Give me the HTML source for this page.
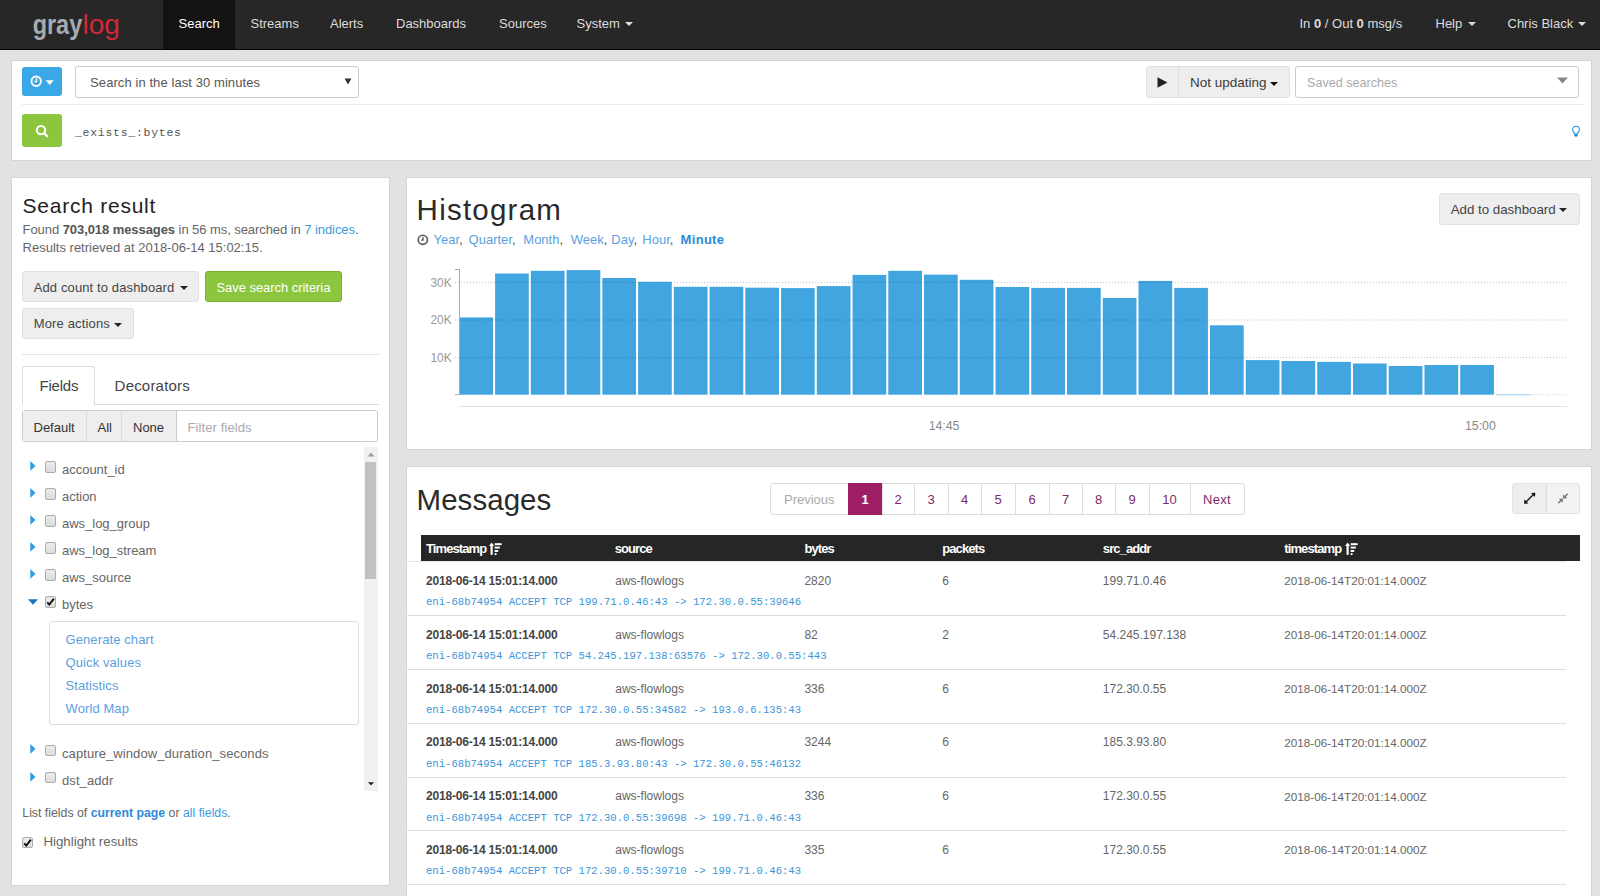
<!DOCTYPE html>
<html><head><meta charset="utf-8">
<style>
*{box-sizing:border-box}
html,body{margin:0;padding:0}
body{width:1600px;height:896px;overflow:hidden;background:#e2e2e2;font-family:"Liberation Sans",sans-serif;color:#666;position:relative}
.a{position:absolute}
.t{position:absolute;white-space:nowrap}
b{font-weight:bold}
</style></head>
<body>

<div class="a" style="left:0px;top:0px;width:1600px;height:49px;background:#272727"></div>
<div class="a" style="left:0px;top:49px;width:1600px;height:1px;background:#050505"></div>
<div class="a" style="left:163px;top:0px;width:72px;height:49px;background:#131313"></div>
<svg class="a" style="left:0;top:0" width="160" height="49" viewBox="0 0 160 49"><text x="32.7" y="33.5" font-family="Liberation Sans" font-weight="bold" font-size="27" fill="#a7aaaf" textLength="49.5" lengthAdjust="spacingAndGlyphs">gray</text><text x="82.5" y="33.5" font-family="Liberation Sans" font-size="27" fill="#d3283a" textLength="37.5" lengthAdjust="spacingAndGlyphs">log</text></svg>
<div class="t" style="left:178.5px;top:17.30px;font-size:13px;line-height:13px;color:#fff;">Search</div>
<div class="t" style="left:250.5px;top:17.30px;font-size:13px;line-height:13px;color:#ddd;">Streams</div>
<div class="t" style="left:330px;top:17.30px;font-size:13px;line-height:13px;color:#ddd;">Alerts</div>
<div class="t" style="left:396px;top:17.30px;font-size:13px;line-height:13px;color:#ddd;">Dashboards</div>
<div class="t" style="left:499px;top:17.30px;font-size:13px;line-height:13px;color:#ddd;">Sources</div>
<div class="t" style="left:576.5px;top:17.30px;font-size:13px;line-height:13px;color:#ddd;">System</div>
<svg class="a" style="left:625px;top:22px" width="8" height="4" viewBox="0 0 8 4"><path d="M0 0 H8 L4.0 4 Z" fill="#ddd"/></svg>
<div class="t" style="left:1299.5px;top:17.30px;font-size:13px;line-height:13px;color:#ddd;">In <b>0</b> / Out <b>0</b> msg/s</div>
<div class="t" style="left:1435.5px;top:17.30px;font-size:13px;line-height:13px;color:#ddd;">Help</div>
<svg class="a" style="left:1468px;top:22px" width="8" height="4" viewBox="0 0 8 4"><path d="M0 0 H8 L4.0 4 Z" fill="#ddd"/></svg>
<div class="t" style="left:1507.5px;top:17.30px;font-size:13px;line-height:13px;color:#ddd;">Chris Black</div>
<svg class="a" style="left:1578px;top:22px" width="8" height="4" viewBox="0 0 8 4"><path d="M0 0 H8 L4.0 4 Z" fill="#ddd"/></svg>
<div class="a" style="left:11px;top:60px;width:1581px;height:101px;background:#fff;border:1px solid #d4d4d4"></div>
<div class="a" style="left:22px;top:67px;width:40px;height:29px;background:#3aa8e7;border-radius:3px"></div>
<svg class="a" style="left:30px;top:74px" width="24" height="16" viewBox="0 0 24 16"><circle cx="6.2" cy="7.2" r="4.75" fill="none" stroke="#fff" stroke-width="1.9"/><path d="M6.5 4.3 V7.6 H4.4" fill="none" stroke="#fff" stroke-width="1.4"/><path d="M15.7 6.2 L23.8 6.2 L19.75 10.9 Z" fill="#fff"/></svg>
<div class="a" style="left:75px;top:66px;width:284px;height:32px;background:#fff;border:1px solid #ccc;border-radius:3px"></div>
<div class="t" style="left:90.1px;top:76.20px;font-size:13px;line-height:13px;color:#555;letter-spacing:0.08px;">Search in the last 30 minutes</div>
<svg class="a" style="left:344px;top:78px" width="8" height="7" viewBox="0 0 8 7"><path d="M0.6 0.6 H7.4 L4 6.4 Z" fill="#333"/></svg>
<div class="a" style="left:22px;top:104px;width:1563px;height:1px;background:#eaeaea"></div>
<div class="a" style="left:1146px;top:66px;width:144px;height:32px;background:#eee;border:1px solid #e2e2e2;border-radius:3px"></div>
<div class="a" style="left:1178px;top:67px;width:1px;height:30px;background:#dedede"></div>
<svg class="a" style="left:1157px;top:77px" width="11" height="11" viewBox="0 0 11 11"><path d="M0.5 0.3 L10.5 5.5 L0.5 10.7 Z" fill="#222"/></svg>
<div class="t" style="left:1190px;top:76.07px;font-size:13.5px;line-height:13.5px;color:#3a3a3a;">Not updating</div>
<svg class="a" style="left:1270px;top:82px" width="8" height="4" viewBox="0 0 8 4"><path d="M0 0 H8 L4.0 4 Z" fill="#111"/></svg>
<div class="a" style="left:1295px;top:66px;width:284px;height:32px;background:#fff;border:1px solid #ccc;border-radius:3px"></div>
<div class="t" style="left:1307px;top:76.83px;font-size:12.6px;line-height:12.6px;color:#aaa;">Saved searches</div>
<svg class="a" style="left:1557px;top:77px" width="12" height="7" viewBox="0 0 12 7"><path d="M0 0.5 H11 L5.5 6.5 Z" fill="#888"/></svg>
<div class="a" style="left:22px;top:114px;width:40px;height:33px;background:#8cc63e;border-radius:3px"></div>
<svg class="a" style="left:34px;top:122px" width="18" height="18" viewBox="0 0 18 18"><circle cx="7.0" cy="8.1" r="4.2" fill="none" stroke="#fff" stroke-width="2.0"/><path d="M10.3 11.4 L13.2 14.2" stroke="#fff" stroke-width="2.2" stroke-linecap="round"/></svg>
<div class="t" style="left:75px;top:127.39px;font-size:11.5px;line-height:11.5px;color:#555;font-family:'Liberation Mono',monospace;letter-spacing:0.72px;">_exists_:bytes</div>
<svg class="a" style="left:1570px;top:124px" width="12" height="14" viewBox="0 0 12 14"><path d="M6 2.3 C3.9 2.3 2.6 3.8 2.6 5.6 C2.6 7.2 3.9 8 5.1 10.6 H6.9 C8.1 8 9.4 7.2 9.4 5.6 C9.4 3.8 8.1 2.3 6 2.3 Z" fill="none" stroke="#1a8fdc" stroke-width="1.1"/><circle cx="6" cy="11.2" r="1.6" fill="#1a8fdc"/></svg>
<div class="a" style="left:11px;top:177px;width:379px;height:709px;background:#fff;border:1px solid #d4d4d4"></div>
<div class="t" style="left:22.6px;top:195.22px;font-size:21px;line-height:21px;color:#222;letter-spacing:0.75px;">Search result</div>
<div class="t" style="left:22.6px;top:222.70px;font-size:13px;line-height:13px;color:#666;letter-spacing:-0.07px;">Found <b style="color:#555">703,018 messages</b> in 56 ms, searched in <span style="color:#3d9ae0">7 indices</span>.</div>
<div class="t" style="left:22.6px;top:240.80px;font-size:13px;line-height:13px;color:#666;">Results retrieved at 2018-06-14 15:02:15.</div>
<div class="a" style="left:22px;top:271px;width:177px;height:31px;background:#eee;border:1px solid #e1e1e1;border-radius:3px"></div>
<div class="t" style="left:33.7px;top:280.50px;font-size:13px;line-height:13px;color:#444;letter-spacing:0.12px;">Add count to dashboard</div>
<svg class="a" style="left:180px;top:286px" width="8" height="4" viewBox="0 0 8 4"><path d="M0 0 H8 L4.0 4 Z" fill="#222"/></svg>
<div class="a" style="left:205px;top:271px;width:137px;height:31px;background:#8cc63e;border:1px solid #74b22e;border-radius:3px"></div>
<div class="t" style="left:216.5px;top:280.50px;font-size:13px;line-height:13px;color:#fff;letter-spacing:-0.05px;">Save search criteria</div>
<div class="a" style="left:22px;top:308px;width:112px;height:31px;background:#eee;border:1px solid #e1e1e1;border-radius:3px"></div>
<div class="t" style="left:33.7px;top:317.00px;font-size:13px;line-height:13px;color:#444;letter-spacing:0.15px;">More actions</div>
<svg class="a" style="left:114px;top:323px" width="8" height="4" viewBox="0 0 8 4"><path d="M0 0 H8 L4.0 4 Z" fill="#222"/></svg>
<div class="a" style="left:22px;top:354px;width:357px;height:1px;background:#e5e5e5"></div>
<div class="a" style="left:22px;top:366px;width:73px;height:39px;background:#fff;border:1px solid #ddd;border-bottom:none;border-radius:3px 3px 0 0"></div>
<div class="a" style="left:95px;top:404px;width:284px;height:1px;background:#ddd"></div>
<div class="t" style="left:39.5px;top:378.30px;font-size:15px;line-height:15px;color:#444;letter-spacing:-0.2px;">Fields</div>
<div class="t" style="left:114.6px;top:378.30px;font-size:15px;line-height:15px;color:#444;letter-spacing:0.2px;">Decorators</div>
<div class="a" style="left:22px;top:410px;width:356px;height:32px;background:#fff;border:1px solid #ccc;border-radius:3px"></div>
<div class="a" style="left:23px;top:411px;width:153px;height:30px;background:#eee"></div>
<div class="a" style="left:86px;top:411px;width:1px;height:30px;background:#ddd"></div>
<div class="a" style="left:121px;top:411px;width:1px;height:30px;background:#ddd"></div>
<div class="a" style="left:176px;top:410px;width:1px;height:32px;background:#ccc"></div>
<div class="t" style="left:33.5px;top:420.50px;font-size:13px;line-height:13px;color:#333;">Default</div>
<div class="t" style="left:97.5px;top:420.50px;font-size:13px;line-height:13px;color:#333;">All</div>
<div class="t" style="left:133px;top:420.50px;font-size:13px;line-height:13px;color:#333;">None</div>
<div class="t" style="left:187.5px;top:420.50px;font-size:13px;line-height:13px;color:#aaa;letter-spacing:0.1px;">Filter fields</div>
<div class="a" style="left:364px;top:447px;width:14px;height:344px;background:#f1f1f1"></div>
<div class="a" style="left:365px;top:462px;width:11px;height:117px;background:#c1c1c1"></div>
<svg class="a" style="left:367px;top:452px" width="8" height="5" viewBox="0 0 8 5"><path d="M0.5 4.5 L4 0.5 L7.5 4.5 Z" fill="#a3a3a3"/></svg>
<svg class="a" style="left:368px;top:782px" width="6" height="4" viewBox="0 0 6 4"><path d="M0 0.2 L6 0.2 L3 3.6 Z" fill="#222"/></svg>
<svg class="a" style="left:29.8px;top:461.15px" width="6" height="10" viewBox="0 0 6 10"><path d="M0.3 0 L5.5 4.9 L0.3 9.8 Z" fill="#2a9ee3"/></svg>
<div class="a" style="left:44.8px;top:461.25px;width:11px;height:11.5px;border:1px solid #ababab;border-radius:2px;background:linear-gradient(#ececec,#dcdcdc)"></div>
<div class="t" style="left:62px;top:463.45px;font-size:13px;line-height:13px;color:#666;letter-spacing:-0.02px;">account_id</div>
<svg class="a" style="left:29.8px;top:488.15px" width="6" height="10" viewBox="0 0 6 10"><path d="M0.3 0 L5.5 4.9 L0.3 9.8 Z" fill="#2a9ee3"/></svg>
<div class="a" style="left:44.8px;top:488.25px;width:11px;height:11.5px;border:1px solid #ababab;border-radius:2px;background:linear-gradient(#ececec,#dcdcdc)"></div>
<div class="t" style="left:62px;top:490.45px;font-size:13px;line-height:13px;color:#666;letter-spacing:-0.02px;">action</div>
<svg class="a" style="left:29.8px;top:515.1500000000001px" width="6" height="10" viewBox="0 0 6 10"><path d="M0.3 0 L5.5 4.9 L0.3 9.8 Z" fill="#2a9ee3"/></svg>
<div class="a" style="left:44.8px;top:515.25px;width:11px;height:11.5px;border:1px solid #ababab;border-radius:2px;background:linear-gradient(#ececec,#dcdcdc)"></div>
<div class="t" style="left:62px;top:517.45px;font-size:13px;line-height:13px;color:#666;letter-spacing:-0.02px;">aws_log_group</div>
<svg class="a" style="left:29.8px;top:542.1500000000001px" width="6" height="10" viewBox="0 0 6 10"><path d="M0.3 0 L5.5 4.9 L0.3 9.8 Z" fill="#2a9ee3"/></svg>
<div class="a" style="left:44.8px;top:542.25px;width:11px;height:11.5px;border:1px solid #ababab;border-radius:2px;background:linear-gradient(#ececec,#dcdcdc)"></div>
<div class="t" style="left:62px;top:544.45px;font-size:13px;line-height:13px;color:#666;letter-spacing:-0.02px;">aws_log_stream</div>
<svg class="a" style="left:29.8px;top:569.1500000000001px" width="6" height="10" viewBox="0 0 6 10"><path d="M0.3 0 L5.5 4.9 L0.3 9.8 Z" fill="#2a9ee3"/></svg>
<div class="a" style="left:44.8px;top:569.25px;width:11px;height:11.5px;border:1px solid #ababab;border-radius:2px;background:linear-gradient(#ececec,#dcdcdc)"></div>
<div class="t" style="left:62px;top:571.45px;font-size:13px;line-height:13px;color:#666;letter-spacing:-0.02px;">aws_source</div>
<svg class="a" style="left:28.3px;top:599.0500000000001px" width="10" height="7" viewBox="0 0 10 7"><path d="M0 0.3 H10 L5 5.8 Z" fill="#1f72b8"/></svg>
<div class="a" style="left:44.8px;top:596.25px;width:11px;height:11.5px;border:1px solid #ababab;border-radius:2px;background:linear-gradient(#ececec,#dcdcdc)"></div>
<svg class="a" style="left:44.8px;top:596.25px" width="11" height="12" viewBox="0 0 11 12"><path d="M2.2 6.4 L4.3 8.6 L8.9 2.6" fill="none" stroke="#111" stroke-width="1.9"/></svg>
<div class="t" style="left:62px;top:598.45px;font-size:13px;line-height:13px;color:#666;">bytes</div>
<div class="a" style="left:49px;top:621px;width:310px;height:104px;background:#fff;border:1px solid #ddd;border-radius:3px"></div>
<div class="t" style="left:65.5px;top:632.50px;font-size:13px;line-height:13px;color:#5b9fe0;letter-spacing:0.1px;">Generate chart</div>
<div class="t" style="left:65.5px;top:655.60px;font-size:13px;line-height:13px;color:#5b9fe0;letter-spacing:0.1px;">Quick values</div>
<div class="t" style="left:65.5px;top:678.70px;font-size:13px;line-height:13px;color:#5b9fe0;letter-spacing:0.1px;">Statistics</div>
<div class="t" style="left:65.5px;top:701.80px;font-size:13px;line-height:13px;color:#5b9fe0;letter-spacing:0.1px;">World Map</div>
<svg class="a" style="left:29.8px;top:744.4000000000001px" width="6" height="10" viewBox="0 0 6 10"><path d="M0.3 0 L5.5 4.9 L0.3 9.8 Z" fill="#2a9ee3"/></svg>
<div class="a" style="left:44.8px;top:744.5px;width:11px;height:11.5px;border:1px solid #ababab;border-radius:2px;background:linear-gradient(#ececec,#dcdcdc)"></div>
<div class="t" style="left:62px;top:746.70px;font-size:13px;line-height:13px;color:#666;letter-spacing:0.09px;">capture_window_duration_seconds</div>
<svg class="a" style="left:29.8px;top:771.6px" width="6" height="10" viewBox="0 0 6 10"><path d="M0.3 0 L5.5 4.9 L0.3 9.8 Z" fill="#2a9ee3"/></svg>
<div class="a" style="left:44.8px;top:771.6999999999999px;width:11px;height:11.5px;border:1px solid #ababab;border-radius:2px;background:linear-gradient(#ececec,#dcdcdc)"></div>
<div class="t" style="left:62px;top:773.90px;font-size:13px;line-height:13px;color:#666;letter-spacing:0.09px;">dst_addr</div>
<div class="t" style="left:22.3px;top:806.59px;font-size:12.3px;line-height:12.3px;color:#666;">List fields of <b style="color:#2d8bd6">current page</b> or <span style="color:#3d9ae0">all fields</span>.</div>
<div class="a" style="left:22.3px;top:836.5px;width:11px;height:11.5px;border:1px solid #ababab;border-radius:2px;background:linear-gradient(#ececec,#dcdcdc)"></div>
<svg class="a" style="left:22.3px;top:836.5px" width="11" height="12" viewBox="0 0 11 12"><path d="M2.2 6.4 L4.3 8.6 L8.9 2.6" fill="none" stroke="#111" stroke-width="1.9"/></svg>
<div class="t" style="left:43.4px;top:835.04px;font-size:13.3px;line-height:13.3px;color:#666;">Highlight results</div>
<div class="a" style="left:406px;top:177px;width:1186px;height:273px;background:#fff;border:1px solid #d4d4d4"></div>
<div class="t" style="left:416.6px;top:195.33px;font-size:29.5px;line-height:29.5px;color:#2a2a2a;letter-spacing:1.23px;">Histogram</div>
<svg class="a" style="left:417px;top:234px" width="12" height="12" viewBox="0 0 12 12"><circle cx="5.8" cy="5.8" r="4.6" fill="none" stroke="#555" stroke-width="1.6"/><path d="M6 3 V6.2 H4" fill="none" stroke="#555" stroke-width="1.3"/></svg>
<div class="t" style="left:433.6px;top:233.10px;font-size:13px;line-height:13px;color:#555;"><span style="color:#5b9fe0">Year</span>,</div>
<div class="t" style="left:468.6px;top:233.10px;font-size:13px;line-height:13px;color:#555;"><span style="color:#5b9fe0">Quarter</span>,</div>
<div class="t" style="left:523.3px;top:233.10px;font-size:13px;line-height:13px;color:#555;"><span style="color:#5b9fe0">Month</span>,</div>
<div class="t" style="left:570.8px;top:233.10px;font-size:13px;line-height:13px;color:#555;"><span style="color:#5b9fe0">Week</span>,</div>
<div class="t" style="left:611.3px;top:233.10px;font-size:13px;line-height:13px;color:#555;"><span style="color:#5b9fe0">Day</span>,</div>
<div class="t" style="left:642.3px;top:233.10px;font-size:13px;line-height:13px;color:#555;"><span style="color:#5b9fe0">Hour</span>,</div>
<div class="t" style="left:680.6px;top:233.10px;font-size:13px;line-height:13px;color:#2d8bd6;font-weight:bold;letter-spacing:0.3px;">Minute</div>
<div class="a" style="left:1439px;top:193px;width:141px;height:32px;background:#eee;border:1px solid #e1e1e1;border-radius:3px"></div>
<div class="t" style="left:1450.7px;top:203.04px;font-size:13.3px;line-height:13.3px;color:#444;">Add to dashboard</div>
<svg class="a" style="left:1559px;top:208px" width="8" height="4" viewBox="0 0 8 4"><path d="M0 0 H8 L4.0 4 Z" fill="#222"/></svg>
<svg class="a" style="left:0;top:0" width="1600" height="896" viewBox="0 0 1600 896">
<rect x="459.35" y="317.4" width="33.7" height="77.30" fill="#41a6df"/>
<rect x="495.10" y="273.5" width="33.7" height="121.20" fill="#41a6df"/>
<rect x="530.84" y="270.8" width="33.7" height="123.90" fill="#41a6df"/>
<rect x="566.59" y="270.1" width="33.7" height="124.60" fill="#41a6df"/>
<rect x="602.33" y="278.0" width="33.7" height="116.70" fill="#41a6df"/>
<rect x="638.08" y="281.8" width="33.7" height="112.90" fill="#41a6df"/>
<rect x="673.82" y="286.8" width="33.7" height="107.90" fill="#41a6df"/>
<rect x="709.57" y="286.8" width="33.7" height="107.90" fill="#41a6df"/>
<rect x="745.31" y="287.7" width="33.7" height="107.00" fill="#41a6df"/>
<rect x="781.06" y="288.1" width="33.7" height="106.60" fill="#41a6df"/>
<rect x="816.80" y="286.1" width="33.7" height="108.60" fill="#41a6df"/>
<rect x="852.55" y="274.9" width="33.7" height="119.80" fill="#41a6df"/>
<rect x="888.29" y="270.8" width="33.7" height="123.90" fill="#41a6df"/>
<rect x="924.03" y="274.6" width="33.7" height="120.10" fill="#41a6df"/>
<rect x="959.78" y="279.8" width="33.7" height="114.90" fill="#41a6df"/>
<rect x="995.52" y="287.0" width="33.7" height="107.70" fill="#41a6df"/>
<rect x="1031.27" y="287.9" width="33.7" height="106.80" fill="#41a6df"/>
<rect x="1067.01" y="287.9" width="33.7" height="106.80" fill="#41a6df"/>
<rect x="1102.76" y="298.0" width="33.7" height="96.70" fill="#41a6df"/>
<rect x="1138.51" y="280.9" width="33.7" height="113.80" fill="#41a6df"/>
<rect x="1174.25" y="287.9" width="33.7" height="106.80" fill="#41a6df"/>
<rect x="1209.99" y="325.3" width="33.7" height="69.40" fill="#41a6df"/>
<rect x="1245.74" y="360.1" width="33.7" height="34.60" fill="#41a6df"/>
<rect x="1281.49" y="361.0" width="33.7" height="33.70" fill="#41a6df"/>
<rect x="1317.23" y="361.9" width="33.7" height="32.80" fill="#41a6df"/>
<rect x="1352.97" y="363.5" width="33.7" height="31.20" fill="#41a6df"/>
<rect x="1388.72" y="366.0" width="33.7" height="28.70" fill="#41a6df"/>
<rect x="1424.46" y="365.0" width="33.7" height="29.70" fill="#41a6df"/>
<rect x="1460.21" y="365.0" width="33.7" height="29.70" fill="#41a6df"/>
<rect x="1495.95" y="394.09999999999997" width="34.5" height="1.2" fill="#a9d3f0"/>
<line x1="455" y1="282.4" x2="1567" y2="282.4" stroke="rgba(0,0,0,0.24)" stroke-width="1" stroke-dasharray="1.1,1.9"/>
<line x1="455" y1="320.0" x2="1567" y2="320.0" stroke="rgba(0,0,0,0.24)" stroke-width="1" stroke-dasharray="1.1,1.9"/>
<line x1="455" y1="357.6" x2="1567" y2="357.6" stroke="rgba(0,0,0,0.24)" stroke-width="1" stroke-dasharray="1.1,1.9"/>
<line x1="1531" y1="394.7" x2="1567" y2="394.7" stroke="rgba(0,0,0,0.18)" stroke-width="1" stroke-dasharray="1.1,1.9"/>
<path d="M455 269.5 H459.5 V394.7 H455" fill="none" stroke="#aaa" stroke-width="1"/>
<line x1="459" y1="406.5" x2="1567" y2="406.5" stroke="#e2e2e2" stroke-width="1"/>
</svg>
<div class="t" style="left:430.4px;top:276.54px;font-size:12px;line-height:12px;color:#999;">30K</div>
<div class="t" style="left:430.4px;top:314.14px;font-size:12px;line-height:12px;color:#999;">20K</div>
<div class="t" style="left:430.4px;top:351.74px;font-size:12px;line-height:12px;color:#999;">10K</div>
<div class="t" style="left:928.7px;top:419.99px;font-size:12.3px;line-height:12.3px;color:#888;">14:45</div>
<div class="t" style="left:1465px;top:419.79px;font-size:12.3px;line-height:12.3px;color:#888;">15:00</div>
<div class="a" style="left:406px;top:466px;width:1186px;height:440px;background:#fff;border:1px solid #d4d4d4"></div>
<div class="t" style="left:416.55px;top:484.83px;font-size:29.5px;line-height:29.5px;color:#2a2a2a;letter-spacing:0.04px;">Messages</div>
<div class="a" style="left:770px;top:483px;width:475px;height:32px;background:#fff;border:1px solid #ddd;border-radius:3px"></div>
<div class="a" style="left:848px;top:484px;width:1px;height:30px;background:#ddd"></div>
<div class="a" style="left:882px;top:484px;width:1px;height:30px;background:#ddd"></div>
<div class="a" style="left:914px;top:484px;width:1px;height:30px;background:#ddd"></div>
<div class="a" style="left:948px;top:484px;width:1px;height:30px;background:#ddd"></div>
<div class="a" style="left:981px;top:484px;width:1px;height:30px;background:#ddd"></div>
<div class="a" style="left:1015px;top:484px;width:1px;height:30px;background:#ddd"></div>
<div class="a" style="left:1049px;top:484px;width:1px;height:30px;background:#ddd"></div>
<div class="a" style="left:1082px;top:484px;width:1px;height:30px;background:#ddd"></div>
<div class="a" style="left:1115px;top:484px;width:1px;height:30px;background:#ddd"></div>
<div class="a" style="left:1149px;top:484px;width:1px;height:30px;background:#ddd"></div>
<div class="a" style="left:1190px;top:484px;width:1px;height:30px;background:#ddd"></div>
<div class="a" style="left:848px;top:483px;width:34px;height:32px;background:#9e1f63"></div>
<div class="t" style="left:784px;top:492.70px;font-size:13px;line-height:13px;color:#aaa;">Previous</div>
<div class="t" style="left:848px;top:492.70px;font-weight:bold;;width:34px;text-align:center;font-size:13px;line-height:13px;color:#fff">1</div>
<div class="t" style="left:882px;top:492.70px;;width:32px;text-align:center;font-size:13px;line-height:13px;color:#7f2868">2</div>
<div class="t" style="left:914px;top:492.70px;;width:34px;text-align:center;font-size:13px;line-height:13px;color:#7f2868">3</div>
<div class="t" style="left:948px;top:492.70px;;width:33px;text-align:center;font-size:13px;line-height:13px;color:#7f2868">4</div>
<div class="t" style="left:981px;top:492.70px;;width:34px;text-align:center;font-size:13px;line-height:13px;color:#7f2868">5</div>
<div class="t" style="left:1015px;top:492.70px;;width:34px;text-align:center;font-size:13px;line-height:13px;color:#7f2868">6</div>
<div class="t" style="left:1049px;top:492.70px;;width:33px;text-align:center;font-size:13px;line-height:13px;color:#7f2868">7</div>
<div class="t" style="left:1082px;top:492.70px;;width:33px;text-align:center;font-size:13px;line-height:13px;color:#7f2868">8</div>
<div class="t" style="left:1115px;top:492.70px;;width:34px;text-align:center;font-size:13px;line-height:13px;color:#7f2868">9</div>
<div class="t" style="left:1149px;top:492.70px;;width:41px;text-align:center;font-size:13px;line-height:13px;color:#7f2868">10</div>
<div class="t" style="left:1203px;top:492.70px;font-size:13px;line-height:13px;color:#7f2868;letter-spacing:0.3px;">Next</div>
<div class="a" style="left:1512px;top:483px;width:68px;height:31px;background:#f3f3f3;border:1px solid #e3e3e3;border-radius:3px"></div>
<div class="a" style="left:1513px;top:484px;width:34px;height:29px;background:#eeeeee;border-radius:3px 0 0 3px"></div>
<div class="a" style="left:1546px;top:484px;width:1px;height:29px;background:#dcdcdc"></div>
<svg class="a" style="left:1512px;top:483px" width="68" height="31" viewBox="0 0 68 31"><path d="M14.2 18.7 L21.2 11.8" stroke="#111" stroke-width="1.3"/><path d="M23.3 9.7 L23.0 14.0 L19.0 10.0 Z M12.1 20.8 L12.4 16.5 L16.4 20.5 Z" fill="#111"/><path d="M46.2 20.3 L49.6 16.9 M55.8 10.8 L52.4 14.2" stroke="#777" stroke-width="1.4"/><path d="M51.0 15.5 L46.8 15.8 L50.7 19.7 Z M51.0 15.5 L55.2 15.2 L51.3 11.3 Z" fill="#777"/></svg>
<div class="a" style="left:421px;top:535px;width:1159px;height:26px;background:#262626"></div>
<div class="a" style="left:406px;top:561px;width:1160px;height:1px;background:#e6e6e6"></div>
<div class="t" style="left:426px;top:542.40px;font-size:13px;line-height:13px;color:#fff;font-weight:bold;letter-spacing:-0.9px;">Timestamp</div>
<svg class="a" style="left:489px;top:542px" width="13" height="13" viewBox="0 0 13 13"><path d="M2.6 0.6 L0.1 4.1 H1.5 V12.8 H3.7 V4.1 H5.1 Z" fill="#fff"/><rect x="5.6" y="1.2" width="7" height="2" fill="#fff"/><rect x="5.6" y="4.6" width="5.2" height="2" fill="#fff"/><rect x="5.6" y="8" width="3.6" height="2" fill="#fff"/><rect x="5.6" y="11.2" width="2" height="1.8" fill="#fff"/></svg>
<div class="t" style="left:614.7px;top:542.40px;font-size:13px;line-height:13px;color:#fff;font-weight:bold;letter-spacing:-0.9px;">source</div>
<div class="t" style="left:804.4px;top:542.40px;font-size:13px;line-height:13px;color:#fff;font-weight:bold;letter-spacing:-0.9px;">bytes</div>
<div class="t" style="left:942.2px;top:542.40px;font-size:13px;line-height:13px;color:#fff;font-weight:bold;letter-spacing:-0.9px;">packets</div>
<div class="t" style="left:1102.8px;top:542.40px;font-size:13px;line-height:13px;color:#fff;font-weight:bold;letter-spacing:-0.9px;">src_addr</div>
<div class="t" style="left:1284.25px;top:542.40px;font-size:13px;line-height:13px;color:#fff;font-weight:bold;letter-spacing:-0.9px;">timestamp</div>
<svg class="a" style="left:1345px;top:542px" width="13" height="13" viewBox="0 0 13 13"><path d="M2.6 0.6 L0.1 4.1 H1.5 V12.8 H3.7 V4.1 H5.1 Z" fill="#fff"/><rect x="5.6" y="1.2" width="7" height="2" fill="#fff"/><rect x="5.6" y="4.6" width="5.2" height="2" fill="#fff"/><rect x="5.6" y="8" width="3.6" height="2" fill="#fff"/><rect x="5.6" y="11.2" width="2" height="1.8" fill="#fff"/></svg>
<div class="t" style="left:426px;top:574.84px;font-size:12px;line-height:12px;color:#444;font-weight:bold;letter-spacing:-0.2px;">2018-06-14 15:01:14.000</div>
<div class="t" style="left:615.25px;top:574.84px;font-size:12px;line-height:12px;color:#666;">aws-flowlogs</div>
<div class="t" style="left:804.4px;top:574.84px;font-size:12px;line-height:12px;color:#666;">2820</div>
<div class="t" style="left:942.2px;top:574.84px;font-size:12px;line-height:12px;color:#666;">6</div>
<div class="t" style="left:1102.8px;top:574.84px;font-size:12px;line-height:12px;color:#666;">199.71.0.46</div>
<div class="t" style="left:1284.25px;top:575.10px;font-size:11.7px;line-height:11.7px;color:#666;">2018-06-14T20:01:14.000Z</div>
<div class="t" style="left:426px;top:597.18px;font-size:10.6px;line-height:10.6px;color:#3b96d9;font-family:'Liberation Mono',monospace;">eni-68b74954 ACCEPT TCP 199.71.0.46:43 -&gt; 172.30.0.55:39646</div>
<div class="a" style="left:406px;top:615px;width:1160px;height:1px;background:#dedede"></div>
<div class="t" style="left:426px;top:628.69px;font-size:12px;line-height:12px;color:#444;font-weight:bold;letter-spacing:-0.2px;">2018-06-14 15:01:14.000</div>
<div class="t" style="left:615.25px;top:628.69px;font-size:12px;line-height:12px;color:#666;">aws-flowlogs</div>
<div class="t" style="left:804.4px;top:628.69px;font-size:12px;line-height:12px;color:#666;">82</div>
<div class="t" style="left:942.2px;top:628.69px;font-size:12px;line-height:12px;color:#666;">2</div>
<div class="t" style="left:1102.8px;top:628.69px;font-size:12px;line-height:12px;color:#666;">54.245.197.138</div>
<div class="t" style="left:1284.25px;top:628.95px;font-size:11.7px;line-height:11.7px;color:#666;">2018-06-14T20:01:14.000Z</div>
<div class="t" style="left:426px;top:651.03px;font-size:10.6px;line-height:10.6px;color:#3b96d9;font-family:'Liberation Mono',monospace;">eni-68b74954 ACCEPT TCP 54.245.197.138:63576 -&gt; 172.30.0.55:443</div>
<div class="a" style="left:406px;top:669px;width:1160px;height:1px;background:#dedede"></div>
<div class="t" style="left:426px;top:682.54px;font-size:12px;line-height:12px;color:#444;font-weight:bold;letter-spacing:-0.2px;">2018-06-14 15:01:14.000</div>
<div class="t" style="left:615.25px;top:682.54px;font-size:12px;line-height:12px;color:#666;">aws-flowlogs</div>
<div class="t" style="left:804.4px;top:682.54px;font-size:12px;line-height:12px;color:#666;">336</div>
<div class="t" style="left:942.2px;top:682.54px;font-size:12px;line-height:12px;color:#666;">6</div>
<div class="t" style="left:1102.8px;top:682.54px;font-size:12px;line-height:12px;color:#666;">172.30.0.55</div>
<div class="t" style="left:1284.25px;top:682.80px;font-size:11.7px;line-height:11.7px;color:#666;">2018-06-14T20:01:14.000Z</div>
<div class="t" style="left:426px;top:704.88px;font-size:10.6px;line-height:10.6px;color:#3b96d9;font-family:'Liberation Mono',monospace;">eni-68b74954 ACCEPT TCP 172.30.0.55:34582 -&gt; 193.0.6.135:43</div>
<div class="a" style="left:406px;top:723px;width:1160px;height:1px;background:#dedede"></div>
<div class="t" style="left:426px;top:736.39px;font-size:12px;line-height:12px;color:#444;font-weight:bold;letter-spacing:-0.2px;">2018-06-14 15:01:14.000</div>
<div class="t" style="left:615.25px;top:736.39px;font-size:12px;line-height:12px;color:#666;">aws-flowlogs</div>
<div class="t" style="left:804.4px;top:736.39px;font-size:12px;line-height:12px;color:#666;">3244</div>
<div class="t" style="left:942.2px;top:736.39px;font-size:12px;line-height:12px;color:#666;">6</div>
<div class="t" style="left:1102.8px;top:736.39px;font-size:12px;line-height:12px;color:#666;">185.3.93.80</div>
<div class="t" style="left:1284.25px;top:736.65px;font-size:11.7px;line-height:11.7px;color:#666;">2018-06-14T20:01:14.000Z</div>
<div class="t" style="left:426px;top:758.73px;font-size:10.6px;line-height:10.6px;color:#3b96d9;font-family:'Liberation Mono',monospace;">eni-68b74954 ACCEPT TCP 185.3.93.80:43 -&gt; 172.30.0.55:46132</div>
<div class="a" style="left:406px;top:777px;width:1160px;height:1px;background:#dedede"></div>
<div class="t" style="left:426px;top:790.24px;font-size:12px;line-height:12px;color:#444;font-weight:bold;letter-spacing:-0.2px;">2018-06-14 15:01:14.000</div>
<div class="t" style="left:615.25px;top:790.24px;font-size:12px;line-height:12px;color:#666;">aws-flowlogs</div>
<div class="t" style="left:804.4px;top:790.24px;font-size:12px;line-height:12px;color:#666;">336</div>
<div class="t" style="left:942.2px;top:790.24px;font-size:12px;line-height:12px;color:#666;">6</div>
<div class="t" style="left:1102.8px;top:790.24px;font-size:12px;line-height:12px;color:#666;">172.30.0.55</div>
<div class="t" style="left:1284.25px;top:790.50px;font-size:11.7px;line-height:11.7px;color:#666;">2018-06-14T20:01:14.000Z</div>
<div class="t" style="left:426px;top:812.58px;font-size:10.6px;line-height:10.6px;color:#3b96d9;font-family:'Liberation Mono',monospace;">eni-68b74954 ACCEPT TCP 172.30.0.55:39698 -&gt; 199.71.0.46:43</div>
<div class="a" style="left:406px;top:830px;width:1160px;height:1px;background:#dedede"></div>
<div class="t" style="left:426px;top:844.09px;font-size:12px;line-height:12px;color:#444;font-weight:bold;letter-spacing:-0.2px;">2018-06-14 15:01:14.000</div>
<div class="t" style="left:615.25px;top:844.09px;font-size:12px;line-height:12px;color:#666;">aws-flowlogs</div>
<div class="t" style="left:804.4px;top:844.09px;font-size:12px;line-height:12px;color:#666;">335</div>
<div class="t" style="left:942.2px;top:844.09px;font-size:12px;line-height:12px;color:#666;">6</div>
<div class="t" style="left:1102.8px;top:844.09px;font-size:12px;line-height:12px;color:#666;">172.30.0.55</div>
<div class="t" style="left:1284.25px;top:844.35px;font-size:11.7px;line-height:11.7px;color:#666;">2018-06-14T20:01:14.000Z</div>
<div class="t" style="left:426px;top:866.43px;font-size:10.6px;line-height:10.6px;color:#3b96d9;font-family:'Liberation Mono',monospace;">eni-68b74954 ACCEPT TCP 172.30.0.55:39710 -&gt; 199.71.0.46:43</div>
<div class="a" style="left:406px;top:884px;width:1160px;height:1px;background:#dedede"></div>
</body></html>
